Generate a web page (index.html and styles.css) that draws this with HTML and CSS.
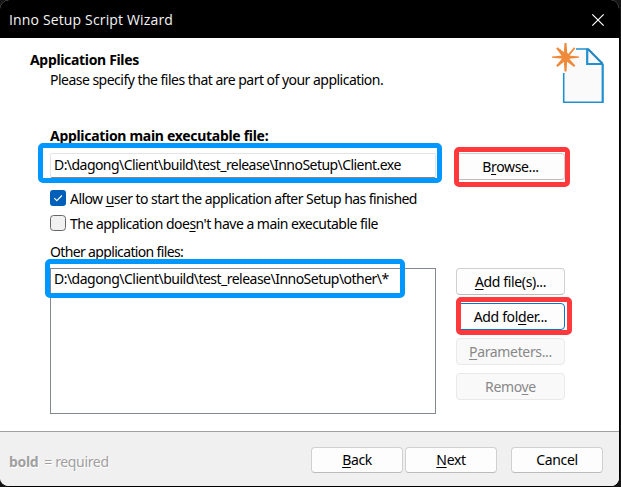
FILE: index.html
```html
<!DOCTYPE html>
<html lang="en">
<head>
<meta charset="utf-8">
<title>Inno Setup Script Wizard</title>
<link rel="stylesheet" href="styles.css">
</head>
<body>
<div class="window">
  <header class="titlebar">
    <span class="title">Inno Setup Script Wizard</span>
    <svg class="close" width="14" height="14" viewBox="0 0 14 14"><path d="M1.3 1.3 12.7 12.7M12.7 1.3 1.3 12.7" stroke="#fff" stroke-width="1.2" fill="none"/></svg>
  </header>
  <main class="page">
    <div class="heading">
      <div class="heading-text">
        <h1>Application Files</h1>
        <p>Please specify the files that are part of your application.</p>
      </div>
      <svg class="doc" width="54" height="62" viewBox="0 0 54 62">
        <path d="M12 30V59.5H50.5V21L37 6H24Z" fill="#fafafa"/>
        <path d="M24 6H36.500M11.700 30V59.200H50.800" fill="none" stroke="#2090d0" stroke-width="1.600"/>
        <path d="M50.700 60V21" stroke="#2090d0" stroke-width="2.200"/>
        <path d="M35.200 5.500V21H50.500" fill="none" stroke="#2090d0" stroke-width="2.200"/>
        <path d="M36 6 50.800 21" stroke="#2585c0" stroke-width="2.200"/>
        <g fill="#ef8a3a">
          <path d="M12.500 0h2L15.500 14 14.500 28.500h-2L11.500 14Z"/>
          <path d="M0 13.500 14 12.300 27 13.500v1.300L14 16 0 14.800Z"/>
          <path d="M4.200 5.600 5.600 4.200 15.500 12 22 4.200 23.300 5.600 16 14.500 23.300 22.500 22 24 13.500 17.500 5.600 24 4.200 22.500 11 14.500Z"/>
          <circle cx="13.600" cy="14" r="4.200"/>
        </g>
      </svg>
    </div>
    <div class="form">
      <div class="label main-label"><b>Application main executable file:</b></div>
      <div class="row exe-row">
        <div class="field">D:\dagong\Client\build\test_release\InnoSetup\Client.exe<i class="mark mark-field"></i></div>
        <div class="btn browse"><span>B<u>r</u>owse...</span><i class="mark mark-browse"></i></div>
      </div>
      <div class="check first">
        <svg width="16" height="16" viewBox="0 0 16 16"><rect width="16" height="16" rx="3" fill="#005fb8"/><path d="M4.300 8.200 6.800 10.700 11.900 5.500" fill="none" stroke="#fff" stroke-width="1.100"/></svg>
        <span>Allow <u>u</u>ser to start the application after Setup has finished</span>
      </div>
      <div class="check second">
        <svg width="16" height="16" viewBox="0 0 16 16"><rect x=".5" y=".5" width="15" height="15" rx="3" fill="#f1f1f1" stroke="#666"/></svg>
        <span>The application doe<u>s</u>n't have a main executable file</span>
      </div>
      <div class="label other">Other application <u>f</u>iles:</div>
      <div class="row">
        <div class="list">D:\dagong\Client\build\test_release\InnoSetup\other\*<i class="mark mark-list"></i></div>
        <div class="stack">
          <div class="btn"><span><u>A</u>dd file(s)...</span></div>
          <div class="btn focus"><span>Add fol<u>d</u>er...</span><i class="mark mark-folder"></i></div>
          <div class="btn off"><span><u>P</u>arameters...</span></div>
          <div class="btn off"><span>Remo<u>v</u>e</span></div>
        </div>
      </div>
    </div>
  </main>
  <footer class="footer">
    <div class="note"><b>bold</b><span>= required</span></div>
    <div class="btn nav"><span><u>B</u>ack</span></div>
    <div class="btn nav next"><span><u>N</u>ext</span></div>
    <div class="btn nav cancel"><span>Cancel</span></div>
  </footer>
</div>
</body>
</html>
```
FILE: styles.css
```css
* { box-sizing: border-box; }
body {
  margin: 0;
  background: #151516;
  width: 621px;
  height: 487px;
  overflow: hidden;
  font: 14px/20px "Noto Sans", sans-serif;
  color: #000;
  letter-spacing: -0.35px;
}
u { text-decoration: underline; text-underline-offset: 2px; text-decoration-thickness: 1px; text-decoration-skip-ink: none; }
.window {
  width: 620px;
  height: 487px;
  border: solid #000;
  border-width: 0 1px 1px 0;
  border-radius: 9px;
  overflow: hidden;
  background: #fff;
  display: flex;
  flex-direction: column;
}
.titlebar {
  height: 38px;
  flex: none;
  background: #000;
  color: #f4f4f4;
  display: flex;
  align-items: center;
  justify-content: space-between;
  padding: 2px 14px 0 9px;
  font: 14px/20px "Open Sans", sans-serif;
}
.title { letter-spacing: 0.15px; white-space: nowrap; }
.close { display: block; }
.page { height: 393px; flex: none; }
.heading { display: flex; justify-content: space-between; padding: 5px 13px 0 30px; height: 88px; }
.heading-text { padding-top: 7px; white-space: nowrap; }
h1, p { margin: 0; font-size: 14px; line-height: 20px; }
h1 { letter-spacing: -0.33px; }
p { padding-left: 20px; letter-spacing: -0.52px; }
.doc { display: block; }
.form { padding-left: 50px; }
.label { height: 20px; white-space: nowrap; }
.main-label { letter-spacing: -0.3px; }
.row { display: flex; align-items: flex-start; }
.exe-row { margin-top: 7px; }
.field {
  position: relative;
  width: 386px;
  height: 25px;
  border: 1px solid #e4e4e4;
  border-bottom-color: #868686;
  border-radius: 2px;
  padding: 1px 3px;
  line-height: 19px;
  letter-spacing: -0.55px;
  white-space: nowrap;
}
.btn {
  position: relative;
  width: 109px;
  height: 27px;
  border: 1px solid #d0d0d0;
  border-bottom-color: #bcbcbc;
  border-radius: 4px;
  background: #fdfdfd;
  display: flex;
  align-items: center;
  justify-content: center;
  white-space: nowrap;
}
.browse { margin-left: 20px; }
.check { display: flex; gap: 4px; height: 20px; align-items: center; white-space: nowrap; margin-top: 5px; }
.check span { padding-top: 2px; }
.check.first { margin-top: 8px; letter-spacing: -0.56px; }
.check.second { letter-spacing: -0.52px; }
.other { margin-top: 9px; letter-spacing: -0.65px; }
.list {
  position: relative;
  width: 386px;
  height: 146px;
  border: 1px solid #828790;
  padding: 0 3px;
  margin-top: 6px;
  letter-spacing: -0.52px;
  white-space: nowrap;
}
.stack { display: flex; flex-direction: column; gap: 8px; margin: 6px 0 0 20px; }
.focus { border-color: #0078d4; }
.off { background: #f9f9f9; border-color: #e9e9e9; color: #888; }
.mark { position: absolute; border: 5px solid #ff383c; border-radius: 5px; }
.mark-field { border-color: #0098ff; left: -13px; top: -11px; width: 404px; height: 40px; }
.mark-list { border-color: #0098ff; left: -6px; top: -10px; width: 360px; height: 39px; }
.mark-browse { left: -3px; top: -7px; width: 116px; height: 40px; }
.mark-folder { left: -1px; top: -7px; width: 116px; height: 38px; }
.footer {
  flex: 1;
  border-top: 1px solid #a0a0a0;
  background: #f0f0f0;
  display: flex;
  align-items: flex-start;
  padding: 15px 16px 0 9px;
}
.note { width: 302px; color: #a0a0a0; text-shadow: 1px 1px #fff; padding-top: 5px; display: flex; gap: 6px; white-space: nowrap; }
.nav { width: 92px; height: 26px; flex: none; }
.next { margin-left: 2px; }
.cancel { margin-left: 14px; }
```
